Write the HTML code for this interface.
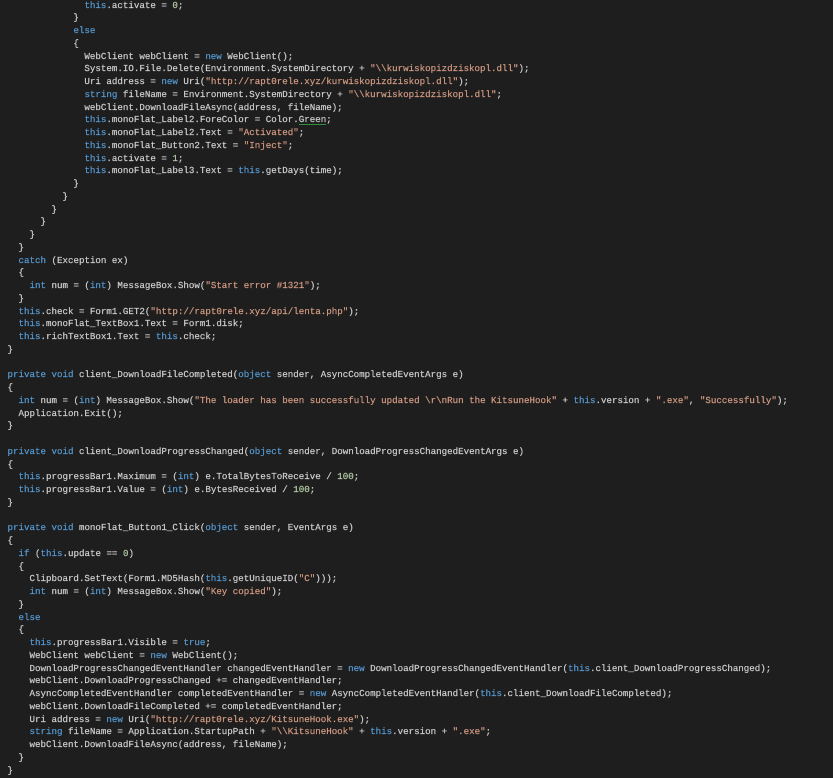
<!DOCTYPE html>
<html>
<head>
<meta charset="utf-8">
<style>
html,body{margin:0;padding:0;width:833px;height:778px;background:#1e1e1e;overflow:hidden}
pre{position:absolute;left:7.5px;top:-0.4px;margin:0;font-family:"Liberation Mono",monospace;font-size:9.17px;line-height:12.75px;color:#d2d2d2;-webkit-text-stroke:0.18px currentColor;text-rendering:geometricPrecision;white-space:pre}
i{font-style:normal;color:#569cd6}
b{font-weight:normal;color:#d69d85}
u{text-decoration:none;color:#b5cea8}
em{position:absolute;left:291.5px;top:124.4px;width:27px;height:1px;background:#2f8f3a}
</style>
</head>
<body>
<pre>              <i>this</i>.activate = <u>0</u>;
            }
            <i>else</i>
            {
              WebClient webClient = <i>new</i> WebClient();
              System.IO.File.Delete(Environment.SystemDirectory + <b>"\\kurwiskopizdziskopl.dll"</b>);
              Uri address = <i>new</i> Uri(<b>"http://rapt0rele.xyz/kurwiskopizdziskopl.dll"</b>);
              <i>string</i> fileName = Environment.SystemDirectory + <b>"\\kurwiskopizdziskopl.dll"</b>;
              webClient.DownloadFileAsync(address, fileName);
              <i>this</i>.monoFlat_Label2.ForeColor = Color.Green;<em></em>
              <i>this</i>.monoFlat_Label2.Text = <b>"Activated"</b>;
              <i>this</i>.monoFlat_Button2.Text = <b>"Inject"</b>;
              <i>this</i>.activate = <u>1</u>;
              <i>this</i>.monoFlat_Label3.Text = <i>this</i>.getDays(time);
            }
          }
        }
      }
    }
  }
  <i>catch</i> (Exception ex)
  {
    <i>int</i> num = (<i>int</i>) MessageBox.Show(<b>"Start error #1321"</b>);
  }
  <i>this</i>.check = Form1.GET2(<b>"http://rapt0rele.xyz/api/lenta.php"</b>);
  <i>this</i>.monoFlat_TextBox1.Text = Form1.disk;
  <i>this</i>.richTextBox1.Text = <i>this</i>.check;
}

<i>private</i> <i>void</i> client_DownloadFileCompleted(<i>object</i> sender, AsyncCompletedEventArgs e)
{
  <i>int</i> num = (<i>int</i>) MessageBox.Show(<b>"The loader has been successfully updated \r\nRun the KitsuneHook"</b> + <i>this</i>.version + <b>".exe"</b>, <b>"Successfully"</b>);
  Application.Exit();
}

<i>private</i> <i>void</i> client_DownloadProgressChanged(<i>object</i> sender, DownloadProgressChangedEventArgs e)
{
  <i>this</i>.progressBar1.Maximum = (<i>int</i>) e.TotalBytesToReceive / <u>100</u>;
  <i>this</i>.progressBar1.Value = (<i>int</i>) e.BytesReceived / <u>100</u>;
}

<i>private</i> <i>void</i> monoFlat_Button1_Click(<i>object</i> sender, EventArgs e)
{
  <i>if</i> (<i>this</i>.update == <u>0</u>)
  {
    Clipboard.SetText(Form1.MD5Hash(<i>this</i>.getUniqueID(<b>"C"</b>)));
    <i>int</i> num = (<i>int</i>) MessageBox.Show(<b>"Key copied"</b>);
  }
  <i>else</i>
  {
    <i>this</i>.progressBar1.Visible = <i>true</i>;
    WebClient webClient = <i>new</i> WebClient();
    DownloadProgressChangedEventHandler changedEventHandler = <i>new</i> DownloadProgressChangedEventHandler(<i>this</i>.client_DownloadProgressChanged);
    webClient.DownloadProgressChanged += changedEventHandler;
    AsyncCompletedEventHandler completedEventHandler = <i>new</i> AsyncCompletedEventHandler(<i>this</i>.client_DownloadFileCompleted);
    webClient.DownloadFileCompleted += completedEventHandler;
    Uri address = <i>new</i> Uri(<b>"http://rapt0rele.xyz/KitsuneHook.exe"</b>);
    <i>string</i> fileName = Application.StartupPath + <b>"\\KitsuneHook"</b> + <i>this</i>.version + <b>".exe"</b>;
    webClient.DownloadFileAsync(address, fileName);
  }
}</pre>
</body>
</html>
